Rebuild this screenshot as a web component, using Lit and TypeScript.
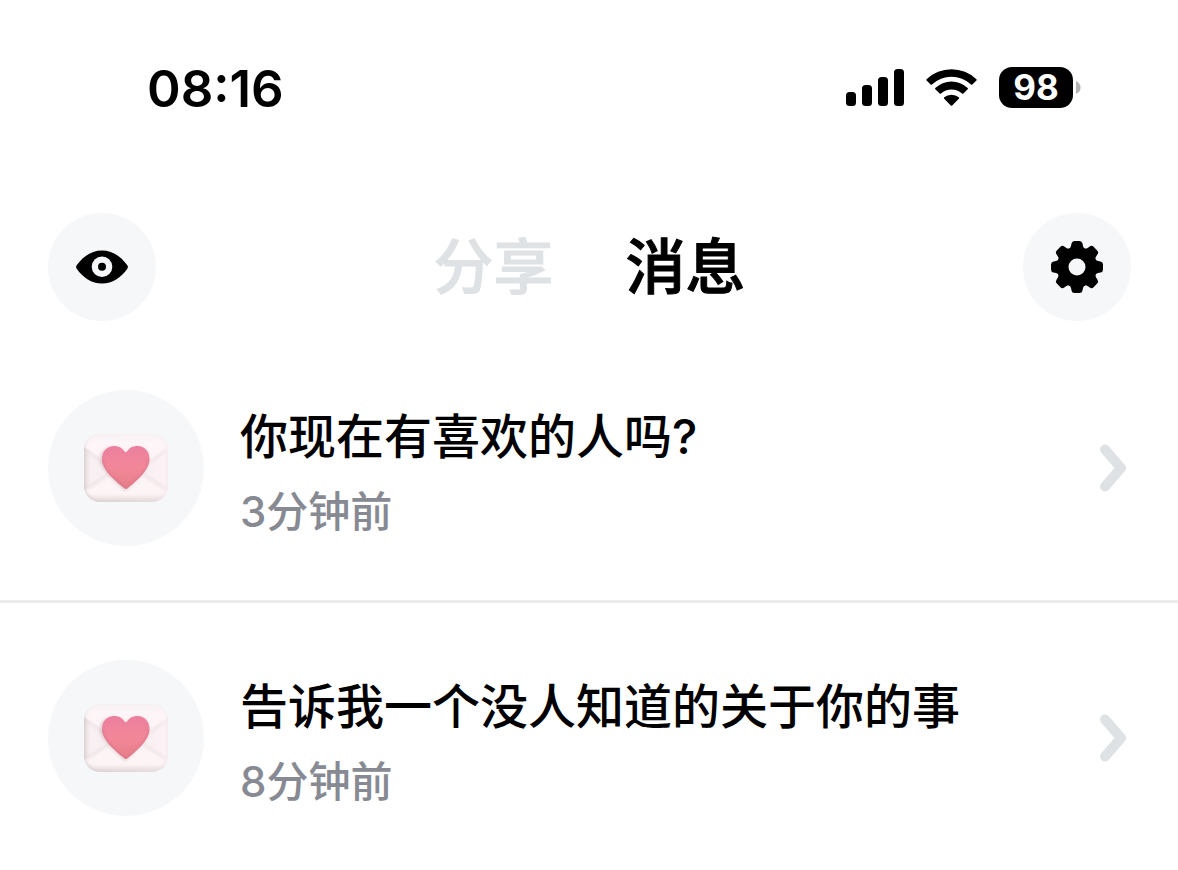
import { LitElement, html, css, svg } from "lit";
import { customElement, property, state } from "lit/decorators.js";
import { classMap } from "lit/directives/class-map.js";

interface Message {
  title: string;
  time: string;
}

@customElement("status-bar")
class StatusBar extends LitElement {
  static styles = css`
    :host {
      display: flex;
      align-items: flex-start;
      justify-content: space-between;
      padding: 67px 97px 103px 147px;
    }
    .clock {
      font-size: 51px;
      font-weight: 600;
      line-height: 43px;
    }
    .indicators {
      display: flex;
      align-items: center;
      gap: 22px;
    }
    svg {
      display: block;
    }
    .battery {
      display: flex;
      align-items: center;
      gap: 3px;
    }
    .level {
      width: 74px;
      border-radius: 13px;
      background: #000;
      color: #fff;
      font-size: 35px;
      font-weight: 700;
      line-height: 41px;
      text-align: center;
    }
  `;

  render() {
    return html`
      <time class="clock">08:16</time>
      <div class="indicators">
        <svg width="58" height="37" viewBox="0 0 58 37" aria-hidden="true">
          <rect x="0" y="23" width="10" height="14" rx="3.500" />
          <rect x="16" y="16" width="10" height="21" rx="3.500" />
          <rect x="32" y="8" width="10" height="29" rx="3.500" />
          <rect x="48" y="0" width="10" height="37" rx="3.500" />
        </svg>
        <svg width="51" height="37" viewBox="0 0 51 37" aria-hidden="true">
          <path d="M.6 10.2a36 36 0 0 1 49.8 0q.6.7 0 1.3l-4 4q-.7.6-1.400 0a28.500 28.500 0 0 0-39 0q-.7.6-1.400 0l-4-4q-.6-.6 0-1.300Z" />
          <path d="M9.300 19a23.500 23.500 0 0 1 32.400 0q.6.700 0 1.300l-4.300 4.200q-.7.600-1.400 0a15.500 15.500 0 0 0-21 0q-.7.600-1.400 0l-4.300-4.200q-.6-.6 0-1.300Z" />
          <path d="M18.200 28.300a11.500 11.500 0 0 1 14.600 0q.7.700 0 1.400l-6.600 6.700q-.7.600-1.400 0l-6.600-6.700q-.7-.7 0-1.400Z" />
        </svg>
        <div class="battery">
          <div class="level">98</div>
          <svg width="5" height="13" viewBox="0 0 5 13" aria-hidden="true">
            <path d="M0 0q4.500 2 4.500 6.500T0 13Z" fill="#b3b3b3" />
          </svg>
        </div>
      </div>
    `;
  }
}

@customElement("top-bar")
class TopBar extends LitElement {
  static styles = css`
    :host {
      display: flex;
      align-items: center;
      justify-content: space-between;
      padding: 0 47px 12px 48px;
    }
    button {
      margin: 0;
      padding: 0;
      border: 0;
      background: none;
      font: inherit;
      color: inherit;
      cursor: pointer;
    }
    .round {
      display: grid;
      place-items: center;
      width: 108px;
      height: 108px;
      border-radius: 50%;
      background: #f5f7f9;
    }
    .tabs {
      display: flex;
      gap: 72px;
    }
    .tab {
      font-size: 60px;
      font-weight: 500;
      line-height: 84px;
      color: #dfe2e5;
      -webkit-text-stroke: 1px currentColor;
    }
    .tab.active {
      color: #000;
    }
  `;

  @state() private active = "消息";

  render() {
    const teeth = [0, 45, 90, 135, 180, 225, 270, 315];
    return html`
      <button class="round" aria-label="浏览">
        <svg width="52" height="34" viewBox="0 0 52 34">
          <path d="M.7 15.300C7 6.500 15.500.5 26 .5s19 6 25.300 14.800q1.200 1.700 0 3.400C45 27.500 36.500 33.500 26 33.500S7 27.500.7 18.700q-1.200-1.700 0-3.400Z" />
          <circle cx="26" cy="16.700" r="10.300" fill="#f5f7f9" />
          <circle cx="26" cy="16.700" r="4" />
        </svg>
      </button>
      <nav class="tabs">
        ${["分享", "消息"].map(
          (name) => html`<button
            class=${classMap({ tab: true, active: name === this.active })}
            @click=${() => (this.active = name)}
          >${name}</button>`
        )}
      </nav>
      <button class="round" aria-label="设置">
        <svg width="52" height="52" viewBox="-26 -26 52 52">
          <circle r="20" />
          ${teeth.map(
            (a) => svg`<path transform="rotate(${a})" d="M-9-17.500Q-6.500-18.500-6-21L-5.500-23.500Q-5-26-2.500-26H2.500Q5-26 5.500-23.500L6-21Q6.500-18.500 9-17.500Z" />`
          )}
          <circle r="8.500" fill="#f5f7f9" />
        </svg>
      </button>
    `;
  }
}

@customElement("message-row")
class MessageRow extends LitElement {
  static styles = css`
    :host {
      display: block;
    }
    .row {
      display: flex;
      align-items: center;
      gap: 36px;
      padding: 57px 49px 54px 48px;
      color: #000;
      text-decoration: none;
    }
    .avatar {
      flex: none;
      display: grid;
      place-items: center;
      width: 156px;
      height: 156px;
      border-radius: 50%;
      background: #f5f7f9;
    }
    .text {
      flex: 1;
      min-width: 0;
      display: flex;
      flex-direction: column;
      gap: 15px;
    }
    .title {
      font-size: 48px;
      font-weight: 500;
      line-height: 72px;
    }
    .time {
      font-size: 42px;
      font-weight: 500;
      line-height: 48px;
      color: #878a93;
    }
    .chevron {
      flex: none;
    }
  `;

  @property({ attribute: false }) message!: Message;

  render() {
    return html`
      <a class="row" href="#">
        <span class="avatar">
          <svg width="92" height="76" viewBox="-4 -4 92 76" aria-hidden="true">
            <defs>
              <linearGradient id="paper" x1="0" y1="0" x2="0" y2="1">
                <stop offset="0" stop-color="#f8f2f3" />
                <stop offset=".12" stop-color="#fdf5f7" />
                <stop offset=".88" stop-color="#fdf4f5" />
                <stop offset="1" stop-color="#e4dadb" />
              </linearGradient>
              <linearGradient id="left" x1="0" y1="0" x2="1" y2="0">
                <stop offset="0" stop-color="#e6dcde" />
                <stop offset=".2" stop-color="#f8f0f2" />
                <stop offset="1" stop-color="#f7eef0" />
              </linearGradient>
              <linearGradient id="right" x1="0" y1="0" x2="1" y2="0">
                <stop offset="0" stop-color="#f7edf0" />
                <stop offset="1" stop-color="#fdf3f6" />
              </linearGradient>
              <linearGradient id="edge" x1="0" y1="0" x2="1" y2="0">
                <stop offset="0" stop-color="#cfc4c7" />
                <stop offset=".4" stop-color="#ddd2d4" />
                <stop offset="1" stop-color="#eee2e6" />
              </linearGradient>
              <linearGradient id="heart" x1="0" y1="0" x2="0" y2="1">
                <stop offset="0" stop-color="#ec7f9e" />
                <stop offset=".5" stop-color="#f28799" />
                <stop offset="1" stop-color="#e67f88" />
              </linearGradient>
              <filter id="soft" x="-20%" y="-20%" width="140%" height="140%">
                <feGaussianBlur stdDeviation="1.500" />
              </filter>
              <clipPath id="sheet"><rect width="84" height="68" rx="16" /></clipPath>
              <clipPath id="inside"><path d="M43.500 54.300Q42 55.500 40.500 54.300C34 49 18 37 18 25C18 17 23.500 12 30 12C35 12 38.500 14.200 40.300 17.300Q41.700 19 43.200 17.300C45 14.200 48.500 12 53.500 12C60 12 65.500 17 65.500 25C65.500 37 50 49 43.500 54.300Z" /></clipPath>
            </defs>
            <g clip-path="url(#sheet)">
              <rect width="84" height="68" fill="url(#paper)" />
              <path d="M0 13L34 35L0 56Z" fill="url(#left)" />
              <path d="M84 15L50 35L84 56Z" fill="url(#right)" />
              <path d="M2 16L25 33M82 16L60 33M2 55L26 40M82 55L58 40" stroke="#dccfd3" stroke-width="1.500" opacity=".6" filter="url(#soft)" />
              <rect x="-1" y="-3" width="86" height="71" rx="17" fill="none" stroke="url(#edge)" stroke-width="3" opacity=".8" filter="url(#soft)" />
            </g>
            <path d="M41 57C36 52 16 37 16 26C16 16 22 13 29 13C36 13 40 16 42 20C44 16 48 13 54 13C60 13 65 17 65 25C65 37 47 52 41 57Z" fill="#b99aa2" opacity=".4" filter="url(#soft)" />
            <path d="M43.500 54.300Q42 55.500 40.500 54.300C34 49 18 37 18 25C18 17 23.500 12 30 12C35 12 38.500 14.200 40.300 17.300Q41.700 19 43.200 17.300C45 14.200 48.500 12 53.500 12C60 12 65.500 17 65.500 25C65.500 37 50 49 43.500 54.300Z" fill="url(#heart)" />
            <path clip-path="url(#inside)" d="M65.500 25C65.500 37 50 49 42 55.500C34 49 18 37 18 25" fill="none" stroke="#ce6b82" stroke-width="2" opacity=".6" filter="url(#soft)" />
          </svg>
        </span>
        <span class="text">
          <span class="title">${this.message.title}</span>
          <span class="time">${this.message.time}</span>
        </span>
        <svg class="chevron" width="30" height="50" viewBox="0 0 30 50" aria-hidden="true">
          <path d="M6 6.500L22 25L6 43.500" fill="none" stroke="#dfe2e5" stroke-width="10" stroke-linecap="round" stroke-linejoin="round" />
        </svg>
      </a>
    `;
  }
}

@customElement("app-root")
class AppRoot extends LitElement {
  static styles = css`
    :host {
      display: block;
      min-height: 100vh;
      background: #fff;
      color: #000;
      font-family: Inter, "Noto Sans CJK SC", sans-serif;
    }
    .list {
      margin: 0;
      padding: 0;
      list-style: none;
    }
    .item + .item {
      border-top: 3px solid #ebebec;
    }
  `;

  private messages: Message[] = [
    { title: "你现在有喜欢的人吗?", time: "3分钟前" },
    { title: "告诉我一个没人知道的关于你的事", time: "8分钟前" },
  ];

  render() {
    return html`
      <status-bar></status-bar>
      <top-bar></top-bar>
      <ul class="list">
        ${this.messages.map(
          (m) => html`<li class="item"><message-row .message=${m}></message-row></li>`
        )}
      </ul>
    `;
  }
}
